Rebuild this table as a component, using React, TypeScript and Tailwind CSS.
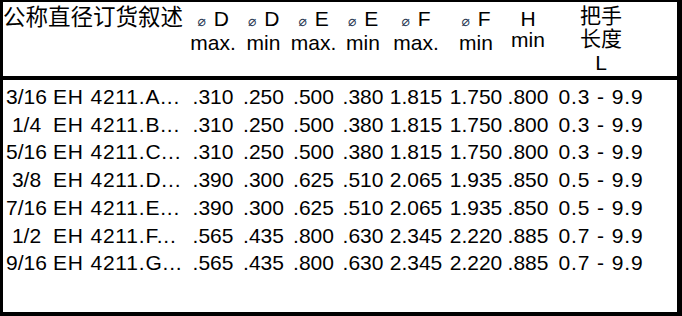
const rows = [
  ['3/16', 'EH 4211.A...', '.310', '.250', '.500', '.380', '1.815', '1.750', '.800', '0.3 - 9.9'],
  ['1/4', 'EH 4211.B...', '.310', '.250', '.500', '.380', '1.815', '1.750', '.800', '0.3 - 9.9'],
  ['5/16', 'EH 4211.C...', '.310', '.250', '.500', '.380', '1.815', '1.750', '.800', '0.3 - 9.9'],
  ['3/8', 'EH 4211.D...', '.390', '.300', '.625', '.510', '2.065', '1.935', '.850', '0.5 - 9.9'],
  ['7/16', 'EH 4211.E...', '.390', '.300', '.625', '.510', '2.065', '1.935', '.850', '0.5 - 9.9'],
  ['1/2', 'EH 4211.F...', '.565', '.435', '.800', '.630', '2.345', '2.220', '.885', '0.7 - 9.9'],
  ['9/16', 'EH 4211.G...', '.565', '.435', '.800', '.630', '2.345', '2.220', '.885', '0.7 - 9.9']
];

const heads: { sym?: boolean; top: string; bottom: string }[] = [
  { sym: true, top: 'D', bottom: 'max.' },
  { sym: true, top: 'D', bottom: 'min' },
  { sym: true, top: 'E', bottom: 'max.' },
  { sym: true, top: 'E', bottom: 'min' },
  { sym: true, top: 'F', bottom: 'max.' },
  { sym: true, top: 'F', bottom: 'min' },
  { top: 'H', bottom: 'min' }
];

// column widths picked so each value sits centred under its header
const grid = 'grid grid-cols-[47px_138px_50px_51px_49px_50px_56px_64px_40px_106px]';
const cjk = 'font-["Noto_Sans_CJK_SC",sans-serif]';

export default function App() {
  return (
    <div className='h-[316px] w-[682px] border-t-2 border-r-[5px] border-b-4 border-l-[3px] border-black bg-white font-["Liberation_Sans",Arial,sans-serif] text-[21px] text-black'>
      <div className={`${grid} h-[78px] border-b-4 border-black`}>
        <div className={`col-span-2 pt-[1.5px] text-[22.5px] leading-[23px] whitespace-nowrap ${cjk}`}>公称直径订货叙述</div>
        {heads.map((h, i) => (
          <div key={i} className="flex flex-col items-center pt-[6px] leading-[21px] whitespace-nowrap">
            <div>
              {h.sym && <span className='mr-[8px] font-["DejaVu_Sans",sans-serif] text-[14px] text-[#2b3a55]'>⌀</span>}
              {h.top}
            </div>
            <div>{h.bottom}</div>
          </div>
        ))}
        <div className="flex flex-col items-center pt-px">
          <div className={`text-[21px] leading-[23px] ${cjk}`}>把手</div>
          <div className={`text-[21px] leading-[23px] ${cjk}`}>长度</div>
          <div className="mt-[3px] leading-[21px]">L</div>
        </div>
      </div>
      <div className="pt-[3px]">
        {rows.map((r) => (
          <div key={r[1]} className={`${grid} leading-[27.7px] whitespace-nowrap`}>
            {r.map((c, j) =>
              j === 1 ? (
                <div key={j} className="pl-[3px] tracking-[0.8px]">{c}</div>
              ) : (
                <div key={j} className={`flex justify-center ${j === 9 ? 'tracking-[0.9px]' : ''}`}>{c}</div>
              )
            )}
          </div>
        ))}
      </div>
    </div>
  );
}
